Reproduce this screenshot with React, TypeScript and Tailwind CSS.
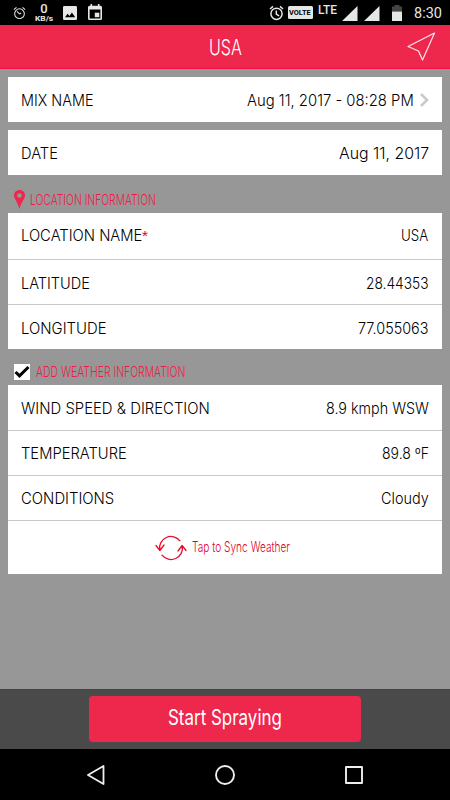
import { useLayoutEffect, useRef, useState } from "react";
import type { ReactNode } from "react";

// Condenses or widens a run of text so that it takes exactly `width` pixels.
function FitText({ width, className = "", children }: { width: number; className?: string; children: ReactNode }) {
  const inner = useRef<HTMLSpanElement>(null);
  const [scale, setScale] = useState(1);
  useLayoutEffect(() => {
    const measure = () => {
      if (inner.current && inner.current.offsetWidth) {
        setScale(width / inner.current.offsetWidth);
      }
    };
    measure();
    document.fonts?.ready.then(measure);
  }, [width]);
  return (
    <span className={`block shrink-0 whitespace-nowrap ${className}`} style={{ width }}>
      <span ref={inner} className="inline-block origin-left" style={{ transform: `scaleX(${scale})` }}>
        {children}
      </span>
    </span>
  );
}

type RowProps = { label: string; labelWidth: number; value: string; valueWidth: number; required?: boolean; chevron?: boolean; className?: string };

function Row({ label, labelWidth, value, valueWidth, required, chevron, className = "h-[45px] pt-[2px]" }: RowProps) {
  return (
    <div className={`flex items-center justify-between pl-[12.5px] pr-[13.5px] text-[15.5px] leading-5 ${className}`}>
      <div className="flex">
        <FitText width={labelWidth}>{label}</FitText>
        {required && <span className="ml-[0.5px] font-['Liberation_Sans'] font-normal text-[#e00012]">*</span>}
      </div>
      <div className="flex items-center">
        <FitText width={valueWidth}>{value}</FitText>
        {chevron && (
          <svg className="ml-[6px] -mt-[2px]" width="9" height="14" viewBox="0 0 9 14" fill="none" stroke="#cbcbcb" strokeWidth="2.6">
            <path d="M1 1l6 6-6 6" />
          </svg>
        )}
      </div>
    </div>
  );
}

function AlarmIcon({ small }: { small?: boolean }) {
  return (
    <svg width={small ? 13 : 15} height={small ? 14 : 16} viewBox="0 0 15 16" fill="none" stroke="#e6e6e6" strokeWidth={small ? 1.2 : 1.5}>
      <circle cx="7.5" cy="8.8" r="5.6" />
      <path d="M1 4l3-2.6M14 4l-3-2.6" />
      {small ? <path d="M4.5 6.2l3 2.8 2-1" /> : <path d="M7.3 5.5v3.6l2.8 1.7" />}
    </svg>
  );
}

function StatusBar() {
  return (
    <div className="flex h-[25px] items-start justify-between bg-black text-[#e6e6e6]">
      <div className="flex pl-[12.5px] pt-[6px]">
        <AlarmIcon small />
        <div className="ml-[9px] -mt-[3px] flex w-[19px] flex-col items-center font-['Roboto'] font-medium">
          <span className="h-[12px] text-[13px] leading-[12px]">0</span>
          <FitText width={18} className="text-[7px] font-bold leading-[8px]">KB/s</FitText>
        </div>
        <svg className="ml-[9.5px]" width="14" height="14" viewBox="0 0 14 14">
          <rect width="14" height="14" rx="1.3" fill="#e6e6e6" />
          <path d="M2 11.2l2.6-3.4 1.8 2.1 2.5-3.4 3.3 4.7z" fill="#000" />
        </svg>
        <svg className="ml-[11px] -mt-[2px]" width="14" height="16" viewBox="0 0 14 16">
          <path fill="#e6e6e6" fillRule="evenodd" d="M2.5 0h1.6v1.7h5.8V0h1.6v1.7h1Q14 1.7 14 3.2v11.3Q14 16 12.5 16h-11Q0 16 0 14.5V3.2Q0 1.7 1.5 1.7h1zM1.6 5.5v9h10.8v-9z" />
          <rect x="6.8" y="8.7" width="4.5" height="4.5" fill="#e6e6e6" />
        </svg>
      </div>
      <div className="flex pr-[8.5px] pt-[5px]">
        <AlarmIcon />
        <div className="ml-[4px] mt-px flex h-[13px] w-[25px] items-center justify-center rounded-[1.5px] bg-[#e6e6e6] font-['Roboto'] text-[8px] font-bold leading-none text-black">
          <FitText width={22} className="leading-none">VOLTE</FitText>
        </div>
        <FitText width={19} className="ml-[5px] font-['Roboto'] text-[12.5px] font-medium leading-[9px]">LTE</FitText>
        <svg className="ml-[5.5px] mt-px" width="38" height="15" viewBox="0 0 38 15" fill="#e6e6e6">
          <path d="M0 15L15.5 0v15zM22 15L37.5 0v15z" />
        </svg>
        <svg className="ml-[11.5px]" width="10" height="16" viewBox="0 0 10 16">
          <path d="M0 6.5V1.5h2.5V0h5v1.5H10v5z" fill="#444" />
          <path d="M0 6.5h10V16H0z" fill="#e6e6e6" />
        </svg>
        <FitText width={28} className="ml-[12px] font-['Roboto'] text-[15px] font-normal leading-[17px]">8:30</FitText>
      </div>
    </div>
  );
}

export default function App() {
  return (
    <div className="flex h-[800px] w-[450px] flex-col overflow-hidden bg-[#979797] font-['Inter','Liberation_Sans',sans-serif] font-light text-black">
      <StatusBar />
      <header className="grid h-[44px] grid-cols-[1fr_auto_1fr] items-center border-b border-[#f90a4c] bg-[#ee274c] text-white">
        <FitText width={33} className="col-start-2 text-[22px] leading-6">USA</FitText>
        <svg className="mr-[14px] justify-self-end" width="29" height="29" viewBox="0 0 29 29" fill="none" stroke="#ffe9ed" strokeWidth="1.2" strokeLinejoin="round">
          <path d="M27.500 1L1 14.500l10.500 4.500 4 9z" />
        </svg>
      </header>

      <main className="flex flex-1 flex-col px-2 pt-[8.3px]">
        <section className="bg-white">
          <Row label="MIX NAME" labelWidth={72.5} value="Aug 11, 2017 - 08:28 PM" valueWidth={166.5} chevron />
        </section>
        <section className="mt-[8px] bg-white">
          <Row label="DATE" labelWidth={37} value="Aug 11, 2017" valueWidth={90} />
        </section>

        <div className="flex h-[38px] items-center pl-[6px] pt-[11px] text-[#ee1c48]">
          <svg width="11" height="19" viewBox="0 0 11 19">
            <path fill="#ee274c" fillRule="evenodd" d="M5.500 0C2.300 0 0 2.400 0 5.400 0 9 4 12 5.500 19 7 12 11 9 11 5.400 11 2.400 8.700 0 5.500 0zm0 3.200a2.300 2.300 0 110 4.600 2.300 2.300 0 010-4.600z" />
          </svg>
          <FitText width={126} className="ml-[5px] text-[14.5px] leading-5">LOCATION INFORMATION</FitText>
        </div>
        <section className="divide-y divide-[#c8c8c8] bg-white">
          <Row label="LOCATION NAME" labelWidth={121} required value="USA" valueWidth={27.5} className="h-[47px]" />
          <Row label="LATITUDE" labelWidth={68.5} value="28.44353" valueWidth={63} className="h-[45px] pt-[3px]" />
          <Row label="LONGITUDE" labelWidth={85.5} value="77.055063" valueWidth={70.5} className="h-[44px] pt-[3px]" />
        </section>

        <div className="flex h-[36px] items-center pl-[6px] pt-[9px] text-[#ee1c48]">
          <div className="flex size-4 items-center justify-center bg-white">
            <svg width="16" height="16" viewBox="0 0 16 16" fill="none" stroke="#000" strokeWidth="3">
              <path d="M1.500 8l4 3.800L14.500 3" />
            </svg>
          </div>
          <FitText width={149.5} className="ml-[6px] text-[14.5px] leading-5">ADD WEATHER INFORMATION</FitText>
        </div>
        <section className="divide-y divide-[#c8c8c8] bg-white">
          <Row label="WIND SPEED & DIRECTION" labelWidth={189} value="8.9 kmph WSW" valueWidth={102.5} className="h-[46px] pt-[2px]" />
          <Row label="TEMPERATURE" labelWidth={105.5} value="89.8 ºF" valueWidth={47} />
          <Row label="CONDITIONS" labelWidth={93} value="Cloudy" valueWidth={47.5} />
          <div className="flex h-[53px] items-center justify-center pl-[10px] pr-[16px] text-[#e0002d]">
            <svg width="32" height="26" viewBox="0 0 32 26" fill="none" stroke="#ec0a2d" strokeWidth="1.3" strokeLinecap="round" strokeLinejoin="round">
              <path d="M25 5.800A11.500 11.500 0 004.700 15M1 10.500l3.900 5L9 10" />
              <path d="M7 20.200A11.500 11.500 0 0027.300 11M23 16l4.100-5.500L31 15.500" />
            </svg>
            <FitText width={98} className="mb-px ml-[5px] text-[14.5px] leading-5">Tap to Sync Weather</FitText>
          </div>
        </section>
      </main>

      <footer className="flex h-[60px] items-center justify-center border-t border-[#434343] bg-[#4a4a4a]">
        <button className="mb-[2px] flex h-[46px] w-[272px] items-center justify-center rounded-[4px] bg-[#ee274c] pb-[3px] text-white">
          <FitText width={114} className="text-[22px] font-normal leading-7">Start Spraying</FitText>
        </button>
      </footer>
      <nav className="flex h-[51px] items-center justify-between bg-black px-[87px]">
        <svg width="18" height="20" viewBox="0 0 18 20" fill="none" stroke="#eee" strokeWidth="1.8" strokeLinejoin="round">
          <path d="M16.500 1v18L1 10z" />
        </svg>
        <svg width="20" height="20" viewBox="0 0 20 20" fill="none" stroke="#eee" strokeWidth="1.9">
          <circle cx="10" cy="10" r="9" />
        </svg>
        <svg width="18" height="18" viewBox="0 0 18 18" fill="none" stroke="#eee" strokeWidth="1.9" strokeLinejoin="round">
          <rect x="1" y="1" width="16" height="16" />
        </svg>
      </nav>
    </div>
  );
}
